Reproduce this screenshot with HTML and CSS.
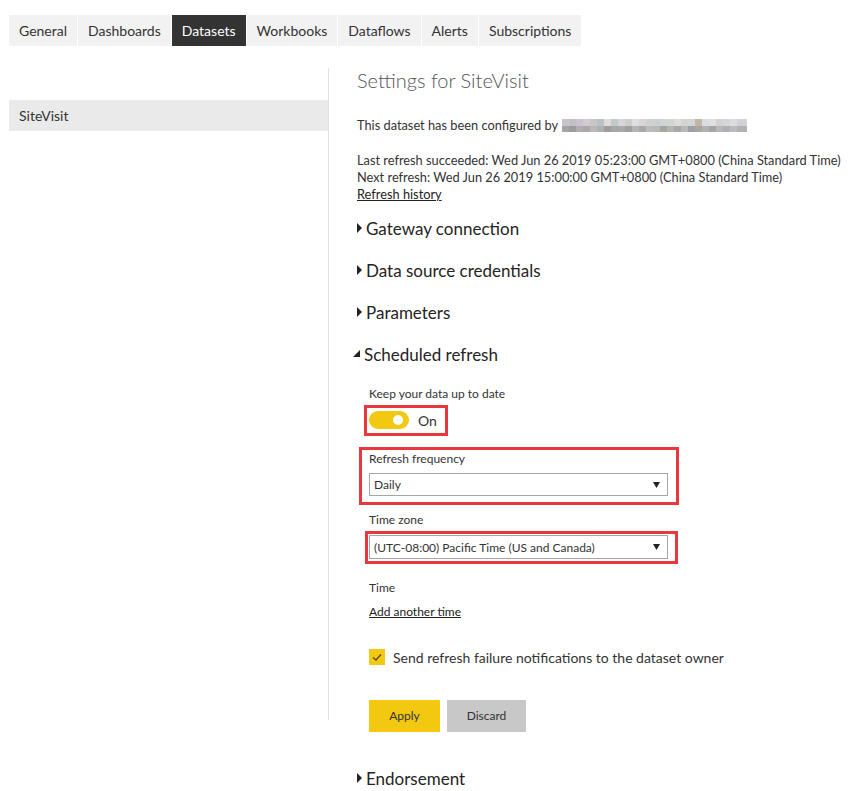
FILE: index.html
```html
<!DOCTYPE html>
<html lang="en">
<head>
<meta charset="utf-8">
<title>Settings for SiteVisit</title>
<link rel="stylesheet" href="styles.css">
</head>
<body>
<nav class="tabs">
  <span class="tab">General</span>
  <span class="tab">Dashboards</span>
  <span class="tab active">Datasets</span>
  <span class="tab">Workbooks</span>
  <span class="tab">Dataflows</span>
  <span class="tab">Alerts</span>
  <span class="tab">Subscriptions</span>
</nav>
<div class="main">
  <aside class="sidebar">
    <div class="side-item">SiteVisit</div>
  </aside>
  <section class="content">
    <h1 class="title">Settings for SiteVisit</h1>
    <p class="configured">This dataset has been configured by <span class="blur"><span class="blur-top"></span><span class="blur-bottom"></span></span></p>
    <div class="refresh-info">
      <div>Last refresh succeeded: Wed Jun 26 2019 05:23:00 GMT+0800 (China Standard Time)</div>
      <div>Next refresh: Wed Jun 26 2019 15:00:00 GMT+0800 (China Standard Time)</div>
      <a class="link" href="#">Refresh history</a>
    </div>

    <div class="section-head first"><svg class="caret" width="6" height="10" viewBox="0 0 6 10"><polygon points="0,0 5,5 0,10" fill="#222"/></svg>Gateway connection</div>
    <div class="section-head"><svg class="caret" width="6" height="10" viewBox="0 0 6 10"><polygon points="0,0 5,5 0,10" fill="#222"/></svg>Data source credentials</div>
    <div class="section-head"><svg class="caret" width="6" height="10" viewBox="0 0 6 10"><polygon points="0,0 5,5 0,10" fill="#222"/></svg>Parameters</div>
    <div class="section-head expanded"><svg class="caret-open" width="8" height="8" viewBox="0 0 8 8"><polygon points="7,0 7,7 0,7" fill="#222"/></svg>Scheduled refresh</div>

    <div class="sched">
      <div class="label">Keep your data up to date</div>
      <div class="hl hl-toggle">
        <span class="toggle"><span class="knob"></span></span>
        <span class="toggle-text">On</span>
      </div>

      <div class="hl hl-freq">
        <div class="label">Refresh frequency</div>
        <div class="select">
          <span>Daily</span>
          <svg width="7" height="6" viewBox="0 0 7 6"><polygon points="0,0 7,0 3.5,6" fill="#222"/></svg>
        </div>
      </div>

      <div class="label tz-label">Time zone</div>
      <div class="hl hl-tz">
        <div class="select">
          <span>(UTC-08:00) Pacific Time (US and Canada)</span>
          <svg width="7" height="6" viewBox="0 0 7 6"><polygon points="0,0 7,0 3.5,6" fill="#222"/></svg>
        </div>
      </div>

      <div class="label time-label">Time</div>
      <a class="link add-time" href="#">Add another time</a>

      <div class="check-row">
        <span class="checkbox"><svg width="16" height="16" viewBox="0 0 16 16"><polyline points="4,8.5 7,11 12,5.5" fill="none" stroke="#5a4a1a" stroke-width="1.3"/></svg></span>
        <span class="check-text">Send refresh failure notifications to the dataset owner</span>
      </div>

      <div class="buttons">
        <span class="btn btn-apply">Apply</span>
        <span class="btn btn-discard">Discard</span>
      </div>
    </div>

    <div class="section-head endorse"><svg class="caret" width="6" height="10" viewBox="0 0 6 10"><polygon points="0,0 5,5 0,10" fill="#222"/></svg>Endorsement</div>
  </section>
</div>
</body>
</html>
```
FILE: styles.css
```css
* { box-sizing: border-box; }
html, body { margin: 0; padding: 0; background: #fff; }
body {
  font-family: Lato, "Open Sans", sans-serif;
  color: #333;
  width: 867px;
  height: 791px;
  overflow: hidden;
}

.tabs {
  display: flex;
  gap: 1px;
  padding: 15px 0 0 9px;
}
.tab {
  height: 31px;
  line-height: 31px;
  padding: 0 10px;
  background: #f2f2f2;
  font-size: 14px;
  color: #333;
}
.tab.active { background: #333; color: #fff; }

.main {
  display: flex;
  margin-top: 22px;
  margin-left: 9px;
}
.sidebar {
  width: 320px;
  height: 652px;
  border-right: 1px solid #e1e1e1;
  padding-top: 32px;
  flex-shrink: 0;
}
.side-item {
  height: 31px;
  line-height: 31px;
  padding-left: 10px;
  background: #eaeaea;
  font-size: 14px;
  color: #333;
}

.content {
  padding-left: 28px;
  flex: 1;
}
.title {
  margin: -2px 0 0;
  font-size: 20px;
  line-height: 28px;
  font-weight: 300;
  color: #555;
}
.configured {
  margin: 23px 0 0;
  font-size: 12.8px;
  line-height: 17px;
  display: flex;
  align-items: center;
}
.blur {
  display: inline-flex;
  flex-direction: column;
  width: 185px;
  height: 13px;
  margin-left: 4px;
}
.blur-top, .blur-bottom { flex: 1; }
.blur-top {
  background: linear-gradient(to right,
    #c8c4cc 0 7px, #c2bfc6 7px 14px, #cbc4cf 14px 21px, #d3cad3 21px 28px, #c9c5c7 28px 35px,
    #b9c1c4 35px 42px, #dcdcd8 42px 49px, #c1c9c8 49px 56px, #d8d4dc 56px 63px, #cdcdc9 63px 70px,
    #e0dce4 70px 77px, #d8d4d8 77px 84px, #d0d0cc 84px 91px, #ccd0d0 91px 98px, #d0d4d4 98px 105px,
    #d4d4d0 105px 112px, #dcdcd8 112px 119px, #d6d2d4 119px 126px, #d4d6d4 126px 133px, #c0b8a4 133px 140px,
    #d8dce4 140px 147px, #e0dede 147px 154px, #d4d0d0 154px 161px, #d8d4dc 161px 168px, #dcdcdc 168px 175px, #d4d0d8 175px 185px);
}
.blur-bottom {
  background: linear-gradient(to right,
    #a6a2a6 0 7px, #9c9ca0 7px 14px, #b0acb4 14px 21px, #aaa6aa 21px 28px, #bcb8b8 28px 35px,
    #aeb2b2 35px 42px, #a09c9c 42px 49px, #a4a8a8 49px 56px, #aca8ac 56px 63px, #a0a0a0 63px 70px,
    #b4b4b4 70px 77px, #a8a8a8 77px 84px, #bcbcb8 84px 91px, #b8b8b4 91px 98px, #a4a4a4 98px 105px,
    #b4b4b0 105px 112px, #a8a8a8 112px 119px, #b8b8b8 119px 126px, #a0a0a4 126px 133px, #a8a8a0 133px 140px,
    #b4b0b0 140px 147px, #a4a4a8 147px 154px, #b8b8b8 154px 161px, #b0b0b4 161px 168px, #bcbcc0 168px 175px, #b4b0b8 175px 185px);
}

.refresh-info {
  margin-top: 18px;
  font-size: 12.8px;
  line-height: 17px;
}
.link {
  color: #222;
  text-decoration: underline;
}
.refresh-info .link { display: block; width: fit-content; }

.section-head {
  display: flex;
  align-items: center;
  height: 24px;
  font-size: 17px;
  color: #252423;
  margin-top: 18px;
}
.section-head.first { margin-top: 13px; }
.caret { margin-right: 3px; flex-shrink: 0; }
.caret-open { margin-left: -4px; margin-right: 3px; flex-shrink: 0; }

.sched {
  padding-left: 12px;
  padding-top: 19px;
  font-size: 12px;
  line-height: 17px;
}
.label {
  font-size: 12px;
  line-height: 17px;
  height: 17px;
  color: #333;
}
.hl { border: 3px solid #e8383d; }

.hl-toggle {
  display: flex;
  align-items: center;
  width: fit-content;
  margin: 3px 0 0 -5px;
  height: 31px;
  padding: 0 8px 1px 2px;
}
.toggle {
  position: relative;
  width: 40px;
  height: 18px;
  border-radius: 9px;
  background: #f2c811;
  flex-shrink: 0;
}
.knob {
  position: absolute;
  right: 6px;
  top: 4px;
  width: 10px;
  height: 10px;
  border-radius: 50%;
  background: #fff;
}
.toggle-text {
  margin-left: 9px;
  font-size: 14px;
  color: #333;
}

.select {
  display: flex;
  align-items: center;
  justify-content: space-between;
  border: 1px solid #a6a6a6;
  background: #fff;
  padding: 0 7px 0 4px;
  font-size: 12px;
  color: #333;
}

.hl-freq {
  width: 320px;
  height: 58px;
  margin: 11px 0 0 -10px;
  padding: 0 8px 0 7px;
}
.hl-freq .select { height: 23px; margin-top: 6px; }

.tz-label { margin-top: 6px; }
.hl-tz {
  width: 313px;
  height: 33px;
  margin: 3px 0 0 -4px;
  padding: 1px 7px 0 1px;
}
.hl-tz .select { height: 24px; }

.time-label { margin-top: 15px; }
.add-time {
  display: block;
  width: fit-content;
  margin-top: 7px;
  font-size: 12px;
  line-height: 17px;
}

.check-row {
  display: flex;
  align-items: center;
  margin-top: 29px;
  height: 16px;
}
.checkbox {
  width: 16px;
  height: 16px;
  background: #f2c811;
  flex-shrink: 0;
}
.checkbox svg { display: block; }
.check-text {
  margin-left: 8px;
  font-size: 14px;
  color: #333;
}

.buttons {
  display: flex;
  gap: 7px;
  margin-top: 35px;
}
.btn {
  height: 32px;
  line-height: 32px;
  text-align: center;
  font-size: 12px;
  color: #333;
}
.btn-apply { width: 71px; background: #f2c811; }
.btn-discard { width: 79px; background: #c8c8c8; }

.section-head.endorse { margin-top: 34px; }
```
